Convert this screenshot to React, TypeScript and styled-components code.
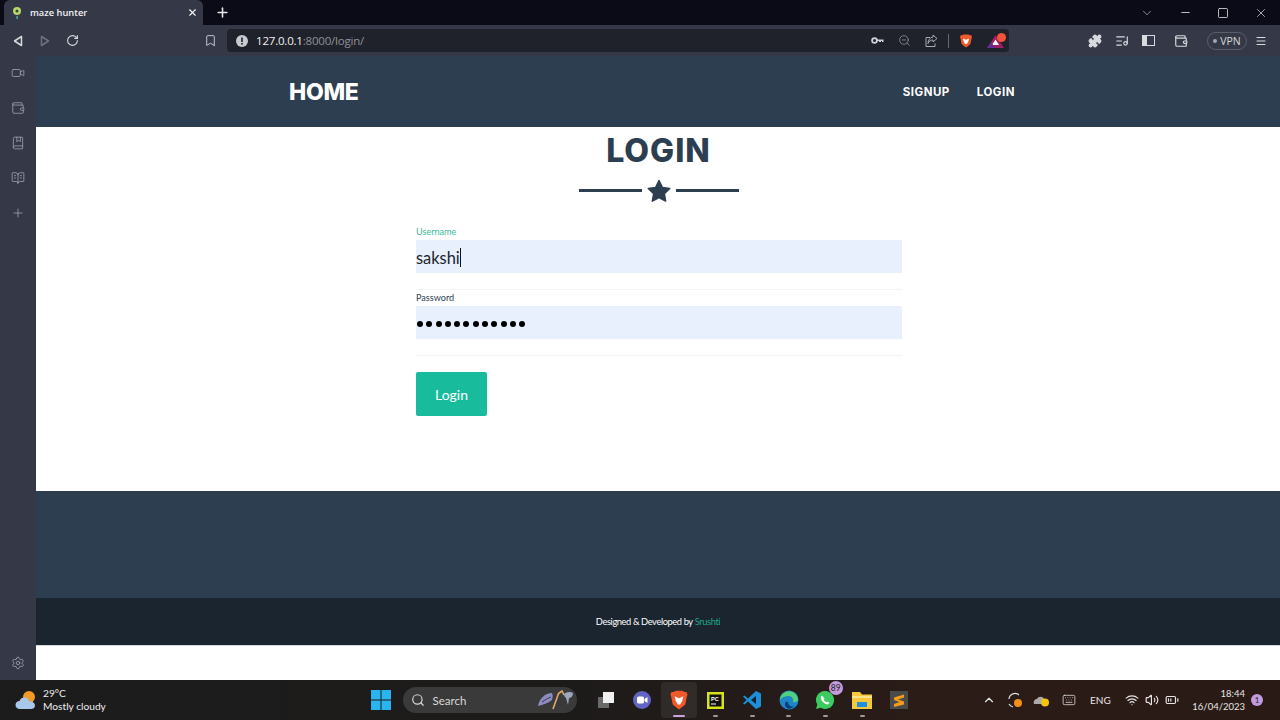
import React from 'react';
import styled, { createGlobalStyle } from 'styled-components';
import {
  BatteryMedium, Bookmark, BookMarked, BookOpenText, ChevronDown, ChevronUp, Keyboard,
  ListMusic, Menu, Minus, Plus, Puzzle, RotateCw, Search, Settings, Square, Video, Volume2, Wallet, Wifi, X, ZoomOut,
} from 'lucide-react';

const GlobalStyle = createGlobalStyle`
  html, body { margin: 0; padding: 0; background: #fff; }
  body { width: 1280px; height: 720px; overflow: hidden; font-family: "Lato", "Liberation Sans", sans-serif; }
  * { box-sizing: border-box; }
`;

const Screen = styled.div`
  width: 1280px;
  height: 720px;
  display: flex;
  flex-direction: column;
`;

/* browser chrome */
const TitleBar = styled.div`
  height: 25px;
  background: #0b0b17;
  display: flex;
  align-items: flex-end;
  padding-left: 4px;
  color: #e8e8ec;
`;

const Tab = styled.div`
  width: 199px;
  height: 25px;
  background: #353947;
  border-radius: 6px 6px 0 0;
  display: flex;
  align-items: center;
  padding: 0 5px 0 7px;
  font: 600 9.3px "Open Sans", sans-serif;
  color: #f2f2f4;
  gap: 7px;
`;

const TabTitle = styled.span`
  flex: 1;
`;

const NewTab = styled.div`
  width: 38px;
  height: 25px;
  display: flex;
  align-items: center;
  justify-content: center;
`;

const WindowButtons = styled.div`
  margin-left: auto;
  height: 25px;
  display: flex;
  align-items: center;
  padding-right: 12px;
  gap: 25px;
  color: #e4e4e8;
`;

const Toolbar = styled.div`
  height: 31px;
  background: #353947;
  display: flex;
  align-items: center;
  color: #d9dade;
  padding-left: 12px;
`;

const NavIcons = styled.div`
  display: flex;
  align-items: center;
  gap: 15px;
  width: 191px;
`;

const BookmarkSlot = styled.div`
  display: flex;
  margin-left: 1px;
`;

const AddressBar = styled.div`
  margin-left: 10px;
  width: 782px;
  flex-shrink: 0;
  height: 23px;
  background: #1f212b;
  border-radius: 4px;
  display: flex;
  align-items: center;
  padding: 0 2px 0 9px;
`;

const Url = styled.span`
  flex: 1;
  margin-left: 8px;
  font: 400 11.5px "Open Sans", sans-serif;
  color: #f2f2f2;
  letter-spacing: -0.2px;
  span { color: #8f919a; }
`;

const AddressIcons = styled.div`
  display: flex;
  align-items: center;
  gap: 10px;
  color: #a9abb3;
`;

const IconCluster = styled.div`
  display: flex;
  align-items: center;
  gap: 14px;
`;

const Divider = styled.div`
  width: 1px;
  height: 14px;
  background: #666975;
`;

const Extensions = styled.div`
  display: flex;
  align-items: center;
  margin-left: 79px;
  gap: 13px;
`;

const WalletSlot = styled.div`
  display: flex;
  margin-left: 6px;
`;

const VpnPill = styled.div`
  width: 40px;
  height: 18px;
  border: 1px solid #5a5d6a;
  border-radius: 9px;
  display: flex;
  align-items: center;
  justify-content: center;
  gap: 3px;
  margin: 0 -5px 0 6px;
  font: 400 10.5px "Open Sans", sans-serif;
  color: #d5d6da;
  &::before {
    content: '';
    width: 4px;
    height: 4px;
    border-radius: 50%;
    background: #a5a7ae;
  }
`;

const Body = styled.div`
  flex: 1;
  display: flex;
  min-height: 0;
`;

const Sidebar = styled.div`
  width: 36px;
  background: #343847;
  display: flex;
  flex-direction: column;
  align-items: center;
  padding-top: 10px;
  gap: 21px;
  color: #a8aab4;
`;

const SidebarBottom = styled.div`
  margin-top: auto;
  padding-bottom: 10px;
  display: flex;
`;

/* the page itself */
const Page = styled.div`
  flex: 1;
  display: flex;
  flex-direction: column;
  background: #fff;
`;

const Navbar = styled.nav`
  height: 71px;
  background: #2c3e50;
  color: #fff;
  display: flex;
  align-items: center;
  justify-content: space-between;
  padding: 0 265px 0 253px;
`;

const Brand = styled.a`
  font: 800 23px "Inter", "Open Sans", sans-serif;
  letter-spacing: -0.3px;
`;

const NavLinks = styled.div`
  display: flex;
  gap: 27px;
  font: 700 11.5px "Inter", "Open Sans", sans-serif;
  letter-spacing: 0.5px;
`;

const Main = styled.main`
  height: 364px;
  display: flex;
  flex-direction: column;
  align-items: center;
`;

const Heading = styled.h1`
  margin: 4px 0 0 1px;
  font: 800 32px/40px "Inter", "Open Sans", sans-serif;
  letter-spacing: 1px;
  color: #2c3e50;
`;

const StarDivider = styled.div`
  margin: 8px 0 0 2px;
  display: flex;
  align-items: center;
  gap: 5px;
  color: #2c3e50;
  &::before, &::after {
    content: '';
    width: 63px;
    height: 3px;
    margin-top: -2px;
    background: #2c3e50;
  }
`;

const Form = styled.form`
  width: 486px;
  margin: 21px 0 0 2px;
`;

const FieldGroup = styled.div`
  height: 66px;
  border-bottom: 1px solid #f1f3f4;
`;

const Label = styled.label<{ $active?: boolean }>`
  display: block;
  height: 16px;
  font-size: 9.1px;
  line-height: 16px;
  color: ${(p) => (p.$active ? '#3fb99c' : '#2c3e50')};
`;

const Field = styled.div`
  height: 33px;
  padding-top: 2px;
  background: #e8f0fe;
  display: flex;
  align-items: center;
  color: #212529;
  font-size: 16.4px;
`;

const Caret = styled.span`
  width: 1px;
  height: 19px;
  background: #111;
`;

const Dots = styled.div`
  display: flex;
  gap: 3.3px;
  padding-left: 1px;
`;

const Dot = styled.span`
  width: 6px;
  height: 6px;
  border-radius: 50%;
  background: #000;
`;

const SubmitButton = styled.button`
  display: block;
  width: 71px;
  height: 44px;
  margin-top: 16px;
  border: 0;
  border-radius: 2px;
  background: #18bc9c;
  color: #fff;
  font: 400 14px "Lato", sans-serif;
`;

const FooterBand = styled.div`
  height: 107px;
  background: #2c3e50;
`;

const Copyright = styled.div`
  height: 48px;
  background: #1a252f;
  border-bottom: 1px solid #d5d8da;
  display: flex;
  align-items: center;
  justify-content: center;
  color: #fff;
  font-size: 9.3px;
  letter-spacing: -0.4px;
  span { color: #1fa88c; margin-left: 2px; }
`;

/* windows taskbar */
const Taskbar = styled.div`
  height: 40px;
  display: grid;
  grid-template-columns: 363px 1fr auto;
  align-items: center;
  background: linear-gradient(90deg, #1c1c1c 0%, #1d1b1a 45%, #2c1c17 75%, #2a1a15 100%);
  color: #e8e8e8;
`;

const Weather = styled.div`
  display: flex;
  align-items: center;
  padding-left: 15px;
  gap: 4px;
`;

const WeatherText = styled.div`
  font-size: 10.2px;
  line-height: 13px;
  color: #eee;
`;

const Apps = styled.div`
  display: flex;
  align-items: center;
`;

const AppSlot = styled.div<{ $active?: boolean; $running?: boolean }>`
  position: relative;
  width: 36.6px;
  height: 36px;
  display: flex;
  align-items: center;
  justify-content: center;
  border-radius: 4px;
  background: ${(p) => (p.$active ? 'rgba(255,255,255,0.07)' : 'transparent')};
  &::after {
    content: '';
    display: ${(p) => (p.$running || p.$active ? 'block' : 'none')};
    position: absolute;
    left: 50%;
    bottom: 1px;
    width: ${(p) => (p.$active ? '12px' : '5px')};
    height: 2px;
    margin-left: ${(p) => (p.$active ? '-6px' : '-2.5px')};
    border-radius: 1px;
    background: ${(p) => (p.$active ? '#c7a5dc' : '#9a9a9a')};
  }
`;

const SearchBox = styled.div`
  width: 174px;
  height: 26px;
  margin: 0 11px 0 3px;
  border-radius: 13px;
  background: #3a3a3a;
  display: flex;
  align-items: center;
  padding: 0 2px 0 8px;
  gap: 8px;
  font-size: 11.5px;
  color: #d8d8d8;
`;

const SearchArt = styled.div`
  margin-left: auto;
  display: flex;
`;

const Badge = styled.span`
  position: absolute;
  top: -1px;
  right: 1px;
  width: 14px;
  height: 14px;
  border-radius: 50%;
  background: #c59bdf;
  color: #222;
  font-size: 8.5px;
  line-height: 14px;
  text-align: center;
`;

const Tray = styled.div`
  display: flex;
  align-items: center;
  padding-right: 17px;
  color: #e6e6e6;
`;

const TrayIcon = styled.div<{ $width?: number }>`
  width: ${(p) => p.$width ?? 26}px;
  display: flex;
  align-items: center;
  justify-content: center;
  font-size: 10px;
`;

const QuickSettings = styled.div`
  display: flex;
  margin-left: 6px;
`;

const Clock = styled.div`
  margin-left: 10px;
  text-align: right;
  font-size: 9.5px;
  line-height: 13px;
`;

const Notify = styled.div`
  width: 12px;
  height: 12px;
  margin-left: 6px;
  border-radius: 50%;
  background: #c59bdf;
  color: #222;
  font-size: 8px;
  line-height: 12px;
  text-align: center;
`;

const BraveLogo = ({ size = 16 }: { size?: number }) => (
  <svg width={size} height={size} viewBox="0 0 16 16">
    <path d="M3.500 1.500 5.500 .5h5l2 1 1.500 0 .8 2-.6 2-1.200 6-3 2.400L8 15.500l-2-1.600-3-2.400-1.200-6-.6-2 .8-2z" fill="#f1592a" />
    <path d="M4.500 5 8 6.500 11.500 5l-.9 3.500L9 11.500H7L5.400 8.500z" fill="#fff" />
  </svg>
);

const BatTriangle = () => (
  <svg width="20" height="16" viewBox="0 0 20 16">
    <path d="M0 15 8.500 2 17 15z" fill="#9e1f63" />
    <path d="M5 12 8.500 6.500 12 12z" fill="#fff" />
    <path d="M0 15 4 9 8.500 15z" fill="#662d91" />
    <circle cx="14.500" cy="4.500" r="4.500" fill="#f4553a" />
  </svg>
);

const KeyIcon = () => (
  <svg width="13" height="13" viewBox="0 0 13 13">
    <circle cx="3.500" cy="6.500" r="2.400" fill="none" stroke="#d0d1d6" strokeWidth="1.800" />
    <path d="M6 5.500h6.500v2.500h-1.500V7h-1v1H8V7H6z" fill="#d0d1d6" />
  </svg>
);

const ShareBox = () => (
  <svg width="13" height="13" viewBox="0 0 13 13" fill="none" stroke="currentColor" strokeWidth="1">
    <path d="M5 3.500H1v9h9v-3" />
    <path d="M8 1l4 3.500L8 8V6C6 6 4 7 3 9.500 3 6 5 3.500 8 3z" />
  </svg>
);

const SidePanelIcon = () => (
  <svg width="13" height="13" viewBox="0 0 13 13">
    <rect x=".5" y="1.500" width="12" height="10" fill="none" stroke="currentColor" />
    <rect x="1" y="2" width="4" height="9" fill="currentColor" />
  </svg>
);

const WeatherIcon = () => (
  <svg width="24" height="22" viewBox="0 0 24 22">
    <circle cx="14" cy="8" r="6" fill="#f09a28" />
    <path d="M5 20c-3 0-4.500-2-4.500-4 0-2.500 2-4 4-4 1-3 3.500-4 6-3.500 2 .5 3.500 2 4 4 3-.5 5.500 1.500 5.500 4s-2 3.500-4 3.500z" fill="#a9c7ea" />
  </svg>
);

const WindowsLogo = () => (
  <svg width="20" height="20" viewBox="0 0 20 20">
    <path d="M0 0h9.500v9.500H0zM10.500 0H20v9.500h-9.500zM0 10.500h9.500V20H0zM10.500 10.500H20V20h-9.500z" fill="#2cb4ee" />
  </svg>
);

const SearchDoodle = () => (
  <svg width="38" height="20" viewBox="0 0 38 20">
    <path d="M1 16C2 9 8 3 15 3c1 2 1 5-.5 7.500C11 13 6 15 1 16z" fill="#8d8bc4" />
    <path d="M5 12c3-2 6-4 9-5" stroke="#3a3a3a" strokeWidth="1" fill="none" />
    <path d="M16 19 21.500 3.500 25 1l2 4" stroke="#dfa968" strokeWidth="1.600" fill="none" />
    <path d="M27 4c2-2 6-3 9-1 0 3-2 5-4 5l-1 7-2-7c-1-1-2-2-2-4z" fill="#9fa6c0" />
  </svg>
);

const TaskView = () => (
  <svg width="18" height="18" viewBox="0 0 18 18">
    <rect x="1" y="6" width="11" height="11" fill="#6a6a6a" />
    <rect x="6" y="1" width="11" height="11" fill="#f0f0f0" />
  </svg>
);

const TeamsIcon = () => (
  <svg width="20" height="20" viewBox="0 0 20 20">
    <circle cx="10" cy="10" r="9" fill="#6264c4" />
    <rect x="5" y="6.500" width="7" height="7" rx="1.500" fill="#fff" />
    <path d="m12.500 9 3-2v6l-3-2z" fill="#fff" />
  </svg>
);

const PyCharmIcon = () => (
  <svg width="17" height="17" viewBox="0 0 17 17">
    <rect width="17" height="17" fill="#d7e31c" />
    <rect x="2.500" y="2.500" width="12" height="12" fill="#111" />
    <text x="4" y="8.500" fontSize="5.500" fontWeight="700" fill="#fff" fontFamily="Liberation Sans">PC</text>
    <rect x="4" y="11.500" width="5" height="1" fill="#fff" />
  </svg>
);

const VsCodeIcon = () => (
  <svg width="20" height="20" viewBox="0 0 20 20">
    <path d="M14 1 19 3.500v13L14 19 6 11.500 2.500 14.500 1 13.500 4.500 10 1 6.500l1.500-1L6 8.500z" fill="#1c8fdb" />
    <path d="M14 6 9 10l5 4z" fill="#15202b" />
  </svg>
);

const EdgeIcon = () => (
  <svg width="20" height="20" viewBox="0 0 20 20">
    <circle cx="10" cy="10" r="9.500" fill="#1d86c9" />
    <path d="M1 8c2-5 7-7.500 11-6.500 4 1 7 4 7 8 0 2.500-3 3-5 2.500 1-3-1-6-4.500-6C6 6 3 7 1 10z" fill="#4fd07f" />
    <path d="M9 12c0 3 3 5 6 4.500-1.500 1.500-4 2.500-6 2-3-1-4-4.500-2-7z" fill="#0b3f7d" />
  </svg>
);

const WhatsAppIcon = () => (
  <svg width="20" height="20" viewBox="0 0 20 20">
    <path d="M10 1a9 9 0 0 0-7.700 13.600L1 19l4.600-1.200A9 9 0 1 0 10 1z" fill="#3ccb5f" />
    <path d="M7 5.500c-1 .7-1.500 2-1 3.500.8 2.500 3 4.700 5.500 5.300 1.500.3 2.500-.3 3-1.300l-2-1.500-1 .8c-1.200-.5-2.300-1.600-2.800-2.800l.8-1z" fill="#fff" />
  </svg>
);

const FilesIcon = () => (
  <svg width="20" height="18" viewBox="0 0 20 18">
    <path d="M0 1h8l2 2.500h10V18H0z" fill="#f6c83e" />
    <rect y="5" width="20" height="2" fill="#fde38a" />
    <rect x="5" y="11" width="10" height="5" fill="#1d8fe0" />
  </svg>
);

const SublimeIcon = () => (
  <svg width="18" height="18" viewBox="0 0 18 18">
    <rect width="18" height="18" fill="#4a4a4a" />
    <path d="M4 6.500 14 3.500v3l-6 2 6 2v3L4 16v-3l5.500-2L4 9z" fill="#f79a1c" />
  </svg>
);

const SyncIcon = () => (
  <svg width="16" height="18" viewBox="0 0 16 18">
    <path d="M2 8a6 6 0 0 1 10-4M2 13a6 6 0 0 0 4 3" stroke="#ddd" strokeWidth="1.200" fill="none" />
    <circle cx="11" cy="12" r="4" fill="#f39019" />
  </svg>
);

const CloudWarn = () => (
  <svg width="17" height="14" viewBox="0 0 17 14">
    <path d="M1 11c-1-3 1-5 3-5 1-3 6-3 7 0 2 0 3 2 2 5z" fill="#aaa" />
    <circle cx="12" cy="9.500" r="4" fill="#f2c511" />
  </svg>
);

const Favicon = () => (
  <svg width="12" height="14" viewBox="0 0 12 14">
    <circle cx="6" cy="5" r="4" fill="#b9d66a" />
    <circle cx="6" cy="5" r="1.500" fill="#2c4a3a" />
    <rect x="5.500" y="10" width="1.200" height="3" fill="#5fc3a0" />
  </svg>
);

const InfoDot = () => (
  <svg width="12" height="12" viewBox="0 0 12 12">
    <circle cx="6" cy="6" r="6" fill="#c9cad0" />
    <rect x="5.200" y="2.500" width="1.600" height="4.500" fill="#1f212b" />
    <rect x="5.200" y="8" width="1.600" height="1.600" fill="#1f212b" />
  </svg>
);

const BackArrow = ({ dim }: { dim?: boolean }) => (
  <svg width="12" height="12" viewBox="0 0 12 12" style={dim ? { transform: 'scaleX(-1)', opacity: 0.35 } : undefined}>
    <path d="M9.500 1.500v9L2.500 6z" fill="none" stroke="currentColor" strokeWidth="1.500" strokeLinejoin="round" />
  </svg>
);

const Star = () => (
  <svg width="24" height="24" viewBox="0 0 24 24">
    <path d="M12 1.500 15.300 8.400 22.800 9.400 17.300 14.600 18.700 22.100 12 18.500 5.300 22.100 6.700 14.600 1.200 9.400 8.700 8.400z" fill="currentColor" stroke="currentColor" strokeLinejoin="round" strokeWidth="1.500" />
  </svg>
);

const App: React.FC = () => {
  return (
    <Screen>
      <GlobalStyle />
      <TitleBar>
        <Tab>
          <Favicon />
          <TabTitle>maze hunter</TabTitle>
          <X size={11} strokeWidth={2.5} />
        </Tab>
        <NewTab><Plus size={15} strokeWidth={2.5} /></NewTab>
        <WindowButtons>
          <ChevronDown size={14} strokeWidth={1} />
          <Minus size={13} strokeWidth={1.5} />
          <Square size={12} strokeWidth={1.6} />
          <X size={14} strokeWidth={1.2} />
        </WindowButtons>
      </TitleBar>

      <Toolbar>
        <NavIcons>
          <BackArrow />
          <BackArrow dim />
          <RotateCw size={13} strokeWidth={2} />
        </NavIcons>
        <BookmarkSlot><Bookmark size={13} strokeWidth={1.6} /></BookmarkSlot>
        <AddressBar>
          <InfoDot />
          <Url>127.0.0.1<span>:8000/login/</span></Url>
          <AddressIcons>
            <IconCluster>
              <KeyIcon />
              <ZoomOut size={13} strokeWidth={1.2} />
              <ShareBox />
            </IconCluster>
            <Divider />
            <IconCluster>
              <BraveLogo size={14} />
              <BatTriangle />
            </IconCluster>
          </AddressIcons>
        </AddressBar>
        <Extensions>
          <Puzzle size={14} fill="currentColor" />
          <ListMusic size={14} />
          <SidePanelIcon />
          <WalletSlot><Wallet size={14} /></WalletSlot>
          <VpnPill>VPN</VpnPill>
          <Menu size={12} />
        </Extensions>
      </Toolbar>

      <Body>
        <Sidebar>
          <Video size={14} strokeWidth={1.3} />
          <Wallet size={14} strokeWidth={1.3} />
          <BookMarked size={14} strokeWidth={1.3} />
          <BookOpenText size={14} strokeWidth={1.3} />
          <Plus size={14} strokeWidth={1.3} />
          <SidebarBottom><Settings size={14} strokeWidth={1.3} /></SidebarBottom>
        </Sidebar>

        <Page>
          <Navbar>
            <Brand>HOME</Brand>
            <NavLinks>
              <span>SIGNUP</span>
              <span>LOGIN</span>
            </NavLinks>
          </Navbar>
          <Main>
            <Heading>LOGIN</Heading>
            <StarDivider><Star /></StarDivider>
            <Form>
              <FieldGroup>
                <Label $active>Username</Label>
                <Field>sakshi<Caret /></Field>
              </FieldGroup>
              <FieldGroup>
                <Label>Password</Label>
                <Field>
                  <Dots>
                    {Array.from({ length: 12 }, (_, i) => <Dot key={i} />)}
                  </Dots>
                </Field>
              </FieldGroup>
              <SubmitButton type="button">Login</SubmitButton>
            </Form>
          </Main>
          <FooterBand />
          <Copyright>Designed &amp; Developed by <span>Srushti</span></Copyright>
        </Page>
      </Body>

      <Taskbar>
        <Weather>
          <WeatherIcon />
          <WeatherText>29°C<br />Mostly cloudy</WeatherText>
        </Weather>
        <Apps>
          <AppSlot><WindowsLogo /></AppSlot>
          <SearchBox>
            <Search size={14} />
            Search
            <SearchArt><SearchDoodle /></SearchArt>
          </SearchBox>
          <AppSlot><TaskView /></AppSlot>
          <AppSlot><TeamsIcon /></AppSlot>
          <AppSlot $active><BraveLogo size={20} /></AppSlot>
          <AppSlot $running><PyCharmIcon /></AppSlot>
          <AppSlot $running><VsCodeIcon /></AppSlot>
          <AppSlot $running><EdgeIcon /></AppSlot>
          <AppSlot $running><WhatsAppIcon /><Badge>89</Badge></AppSlot>
          <AppSlot $running><FilesIcon /></AppSlot>
          <AppSlot><SublimeIcon /></AppSlot>
        </Apps>
        <Tray>
          <TrayIcon><ChevronUp size={14} /></TrayIcon>
          <TrayIcon><SyncIcon /></TrayIcon>
          <TrayIcon><CloudWarn /></TrayIcon>
          <TrayIcon $width={30}><Keyboard size={14} strokeWidth={1.3} /></TrayIcon>
          <TrayIcon $width={32}>ENG</TrayIcon>
          <QuickSettings>
            <TrayIcon $width={20}><Wifi size={14} /></TrayIcon>
            <TrayIcon $width={20}><Volume2 size={14} /></TrayIcon>
            <TrayIcon $width={20}><BatteryMedium size={14} /></TrayIcon>
          </QuickSettings>
          <Clock>18:44<br />16/04/2023</Clock>
          <Notify>1</Notify>
        </Tray>
      </Taskbar>
    </Screen>
  );
};

export default App;
